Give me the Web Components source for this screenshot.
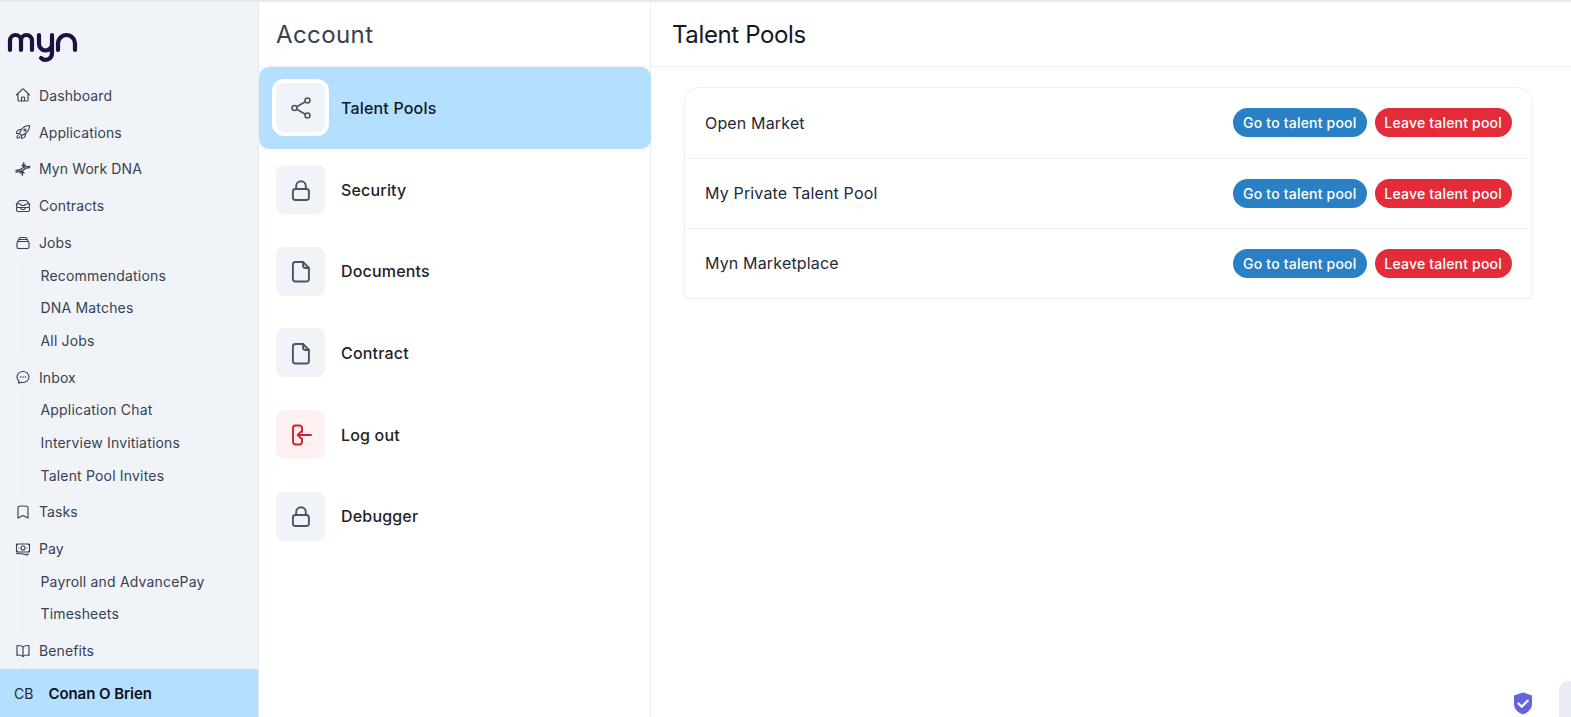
<!DOCTYPE html>
<html>
<head>
<meta charset="utf-8">
<style>
  html, body { margin: 0; height: 100%; }
  body { font-family: Inter, "Liberation Sans", sans-serif; color: #111827; background: #fff; overflow: hidden; }
</style>
</head>
<body>
<app-shell>
  <side-bar slot="side">
    <nav-item icon="home">Dashboard</nav-item>
    <nav-item icon="rocket">Applications</nav-item>
    <nav-item icon="dna">Myn Work DNA</nav-item>
    <nav-item icon="inbox">Contracts</nav-item>
    <nav-item icon="stack">Jobs</nav-item>
    <sub-nav>
      <sub-item>Recommendations</sub-item>
      <sub-item>DNA Matches</sub-item>
      <sub-item>All Jobs</sub-item>
    </sub-nav>
    <nav-item icon="chat">Inbox</nav-item>
    <sub-nav>
      <sub-item>Application Chat</sub-item>
      <sub-item>Interview Invitiations</sub-item>
      <sub-item>Talent Pool Invites</sub-item>
    </sub-nav>
    <nav-item icon="bookmark">Tasks</nav-item>
    <nav-item icon="money">Pay</nav-item>
    <sub-nav>
      <sub-item>Payroll and AdvancePay</sub-item>
      <sub-item>Timesheets</sub-item>
    </sub-nav>
    <nav-item icon="book">Benefits</nav-item>
    <sub-nav style="height: 20px"></sub-nav>
  </side-bar>
  <account-panel slot="middle">
    <account-row icon="share" active>Talent Pools</account-row>
    <account-row icon="lock">Security</account-row>
    <account-row icon="file">Documents</account-row>
    <account-row icon="file">Contract</account-row>
    <account-row icon="logout" danger>Log out</account-row>
    <account-row icon="lock">Debugger</account-row>
  </account-panel>
  <pools-panel slot="main">
    <pool-row>Open Market</pool-row>
    <pool-row>My Private Talent Pool</pool-row>
    <pool-row>Myn Marketplace</pool-row>
  </pools-panel>
</app-shell>

<script>
const ICONS = {
  home: '<path d="M2.25 12l8.954-8.955c.44-.439 1.152-.439 1.591 0L21.75 12M4.5 9.75v10.125c0 .621.504 1.125 1.125 1.125H9.75v-4.875c0-.621.504-1.125 1.125-1.125h2.25c.621 0 1.125.504 1.125 1.125V21h4.125c.621 0 1.125-.504 1.125-1.125V9.75M8.25 21h8.25"/>',
  rocket: '<path d="M15.59 14.37a6 6 0 01-5.84 7.38v-4.8m5.84-2.58a14.98 14.98 0 006.16-12.12A14.98 14.98 0 009.631 8.41m5.96 5.96a14.926 14.926 0 01-5.841 2.58m-.119-8.54a6 6 0 00-7.381 5.84h4.8m2.581-5.84a14.927 14.927 0 00-2.58 5.84m2.699 2.7c-.103.021-.207.041-.311.06a15.09 15.09 0 01-2.448-2.448 14.9 14.9 0 01.06-.312m-2.24 2.39a4.493 4.493 0 00-1.757 4.306 4.493 4.493 0 004.306-1.758M16.5 9a1.5 1.5 0 11-3 0 1.5 1.5 0 013 0z"/>',
  dna: '<path stroke-width="2" d="M1.500 14c4.500 0 6.500-.5 8.500-2.500s4-3.500 12-3.500"/><path stroke-width="2" d="M1.500 16.500c8 0 9.500-1.500 11.500-3.500s4-3 9-3"/><path stroke-width="2" d="M13 2.500V8M10.500 6l2.500 2.500L15.500 6"/><path stroke-width="2" d="M11 21.500V16M8.500 18l2.500-2.500 2.500 2.500"/>',
  inbox: '<path d="M7.875 14.25l1.214 1.942a2.25 2.25 0 001.908 1.058h2.006c.776 0 1.497-.4 1.908-1.058l1.214-1.942M2.41 9h4.636a2.25 2.25 0 011.872 1.002l.164.246a2.25 2.25 0 001.872 1.002h2.092a2.25 2.25 0 001.872-1.002l.164-.246A2.25 2.25 0 0116.954 9h4.636M2.41 9a2.25 2.25 0 00-.16.832V12a2.25 2.25 0 002.25 2.25h15A2.25 2.25 0 0021.75 12V9.832c0-.287-.055-.57-.16-.832M2.41 9a2.25 2.25 0 01.382-.632l3.285-3.832a2.25 2.25 0 011.708-.786h8.43c.657 0 1.281.287 1.709.786l3.284 3.832c.163.19.291.404.382.632M4.500 20.25h15A2.25 2.25 0 0021.75 18v-2.625c0-.621-.504-1.125-1.125-1.125H3.375c-.621 0-1.125.504-1.125 1.125V18a2.25 2.25 0 002.25 2.25z"/>',
  stack: '<path d="M6 6.878V6a2.25 2.25 0 012.25-2.25h7.500A2.25 2.25 0 0118 6v.878m-12 0c.235-.083.487-.128.75-.128h10.500c.263 0 .515.045.75.128m-12 0A2.25 2.25 0 004.500 9v.878m13.500-3A2.25 2.25 0 0119.500 9v.878m0 0a2.246 2.246 0 00-.75-.128H5.250c-.263 0-.515.045-.75.128m15 0A2.25 2.25 0 0121 12v6a2.25 2.25 0 01-2.25 2.25H5.250A2.25 2.25 0 013 18v-6c0-.98.626-1.813 1.500-2.122"/>',
  chat: '<path d="M8.625 12a.375.375 0 11-.75 0 .375.375 0 01.75 0zm0 0H8.25m4.125 0a.375.375 0 11-.75 0 .375.375 0 01.75 0zm0 0H12m4.125 0a.375.375 0 11-.75 0 .375.375 0 01.75 0zm0 0h-.375M21 12c0 4.556-4.03 8.25-9 8.25a9.764 9.764 0 01-2.555-.337A5.972 5.972 0 015.41 20.97a5.969 5.969 0 01-.474-.065 4.48 4.48 0 00.978-2.025c.09-.457-.133-.901-.467-1.226C3.93 16.178 3 14.189 3 12c0-4.556 4.03-8.25 9-8.25s9 3.694 9 8.25z"/>',
  bookmark: '<path d="M17.593 3.322c1.1.128 1.907 1.077 1.907 2.185V21L12 17.25 4.500 21V5.507c0-1.108.806-2.057 1.907-2.185a48.507 48.507 0 0111.186 0z"/>',
  money: '<path d="M2.25 18.75a60.07 60.07 0 0115.797 2.101c.727.198 1.453-.342 1.453-1.096V18.75M3.750 4.500v.75A.75.75 0 013 6h-.75m0 0v-.375c0-.621.504-1.125 1.125-1.125H20.25M2.25 6v9m18-10.500v.75c0 .414.336.75.75.75h.75m-1.500-1.500h.375c.621 0 1.125.504 1.125 1.125v9.750c0 .621-.504 1.125-1.125 1.125h-.375m1.500-1.500H21a.75.75 0 00-.75.75v.75m0 0H3.750m0 0h-.375a1.125 1.125 0 01-1.125-1.125V15m1.500 1.500v-.75A.75.75 0 003 15h-.75M15 10.500a3 3 0 11-6 0 3 3 0 016 0zm3 0h.008v.008H18V10.500zm-12 0h.008v.008H6V10.500z"/>',
  book: '<path d="M12 6.042A8.967 8.967 0 006 3.750c-1.052 0-2.062.18-3 .512v14.25A8.987 8.987 0 016 18c2.305 0 4.408.867 6 2.292m0-14.25a8.966 8.966 0 016-2.292c1.052 0 2.062.18 3 .512v14.25A8.987 8.987 0 0018 18a8.967 8.967 0 00-6 2.292m0-14.25v14.25"/>',
  share: '<circle cx="5.500" cy="12" r="2.500"/><circle cx="18.500" cy="4.500" r="2.500"/><circle cx="18.500" cy="19.500" r="2.500"/><path d="M7.700 10.700l8.600-4.900M7.700 13.300l8.600 4.900"/>',
  lock: '<path d="M7.200 11V8a4.800 4.800 0 019.600 0v3"/><rect x="3.900" y="11" width="16" height="11" rx="2.500"/>',
  file: '<path d="M6.400 3h7.600l5.900 6v11a2.500 2.500 0 01-2.500 2.500H6.400A2.500 2.500 0 013.900 20V5.500A2.500 2.500 0 016.400 3z"/><path d="M14 3v3.500A2.500 2.500 0 0016.500 9h3.400"/>',
  logout: '<path d="M13 9V5a2.500 2.500 0 00-2.500-2.500h-4A2.500 2.500 0 004 5v14a2.500 2.500 0 002.500 2.500h4A2.500 2.500 0 0013 19v-3.500"/><path d="M22 12H9M12 8.700L8.700 12l3.300 3.300"/>'
};

class IconGlyph extends HTMLElement {
  connectedCallback() {
    const name = this.getAttribute('name');
    this.attachShadow({ mode: 'open' });
    this.shadowRoot.innerHTML = `
      <style>
        :host { display: inline-flex; width: var(--size, 16px); height: var(--size, 16px); flex: none; }
        svg { width: 100%; height: 100%; fill: none; stroke: currentColor; stroke-width: var(--weight, 1.5); stroke-linecap: round; stroke-linejoin: round; }
      </style>
      <svg viewBox="0 0 24 24">${ICONS[name] || ''}</svg>`;
  }
}
customElements.define('icon-glyph', IconGlyph);

class AppShell extends HTMLElement {
  connectedCallback() {
    this.attachShadow({ mode: 'open' });
    this.shadowRoot.innerHTML = `
      <style>
        :host { display: flex; flex-direction: column; height: 717px; position: relative; overflow: hidden; }
        .topline { height: 2px; background: #e6e7ea; flex: none; }
        .cols { display: flex; flex: 1; min-height: 0; }
        .shield { position: absolute; left: 1513px; top: 692px; width: 20px; height: 23px; }
        .chat-stub { position: absolute; left: 1559px; top: 681px; width: 30px; height: 50px; border-radius: 10px; background: #e9ebf5; }
      </style>
      <div class="topline"></div>
      <div class="cols">
        <slot name="side"></slot>
        <slot name="middle"></slot>
        <slot name="main"></slot>
      </div>
      <svg class="shield" viewBox="0 0 20 23">
        <path fill="#6465de" d="M10 .5l9 3v8.500c0 5-4 8.600-9 10.500C5 20.600 1 17 1 12V3.500z"/>
        <path fill="none" stroke="#fff" stroke-width="2.200" stroke-linecap="round" stroke-linejoin="round" d="M5.500 11.500l3.200 3.200 6-6"/>
      </svg>
      <div class="chat-stub"></div>`;
  }
}
customElements.define('app-shell', AppShell);

class SideBar extends HTMLElement {
  connectedCallback() {
    this.attachShadow({ mode: 'open' });
    this.shadowRoot.innerHTML = `
      <style>
        :host { display: flex; flex-direction: column; width: 259px; flex: none; background: #f0f4f9; box-sizing: border-box; border-right: 1px solid #e8ebf0; }
        .logo { height: 75px; flex: none; box-sizing: border-box; padding: 29px 0 0 6px; }
        .logo svg { display: block; width: 76px; height: 36px; fill: none; stroke: #1b1240; stroke-width: 4.200; stroke-linecap: round; stroke-linejoin: round; }
        nav { flex: 1; min-height: 0; overflow: hidden; display: flex; flex-direction: column; }
        .user { height: 48px; flex: none; display: flex; align-items: center; background: #b5dffe; font-size: 14px; padding-left: 14px; gap: 15px; color: #1f2937; }
        .user b { font-size: 15px; font-weight: 600; letter-spacing: -.05px; color: #0b1220; }
      </style>
      <div class="logo">
        <svg viewBox="0 0 76 36">
          <path d="M4 19V9.500a5.500 5.500 0 0 1 11 0V19M15 9.500a5.500 5.500 0 0 1 11 0V19"/>
          <path d="M33 4v9a6.500 6.500 0 0 0 13 0V4M46 13v9.500a6.500 6.500 0 0 1-11 4.600"/>
          <path d="M52 19V12.500a8.500 8.500 0 0 1 17 0V19"/>
        </svg>
      </div>
      <nav><slot></slot></nav>
      <div class="user"><span>CB</span><b>Conan O Brien</b></div>`;
  }
}
customElements.define('side-bar', SideBar);

class NavItem extends HTMLElement {
  connectedCallback() {
    const icon = this.getAttribute('icon');
    this.attachShadow({ mode: 'open' });
    this.shadowRoot.innerHTML = `
      <style>
        :host { display: flex; align-items: center; height: 36.800px; flex: none; padding-left: 15px; gap: 8px; font-size: 14px; letter-spacing: .1px; color: #374151; --size: 16px; --weight: 1.700; }
      </style>
      <icon-glyph name="${icon}"></icon-glyph>
      <span><slot></slot></span>`;
  }
}
customElements.define('nav-item', NavItem);

class SubNav extends HTMLElement {
  connectedCallback() {
    this.attachShadow({ mode: 'open' });
    this.shadowRoot.innerHTML = `
      <style>
        :host { display: flex; flex-direction: column; flex: none; margin: -2px 0 2px 22px; border-left: 1px solid #e6e9ef; padding-left: 17.500px; }
      </style>
      <slot></slot>`;
  }
}
customElements.define('sub-nav', SubNav);

class SubItem extends HTMLElement {
  connectedCallback() {
    this.attachShadow({ mode: 'open' });
    this.shadowRoot.innerHTML = `
      <style>
        :host { display: flex; align-items: center; height: 32.600px; font-size: 14px; letter-spacing: .18px; color: #374151; }
      </style>
      <slot></slot>`;
  }
}
customElements.define('sub-item', SubItem);

class AccountPanel extends HTMLElement {
  connectedCallback() {
    this.attachShadow({ mode: 'open' });
    this.shadowRoot.innerHTML = `
      <style>
        :host { display: flex; flex-direction: column; width: 392px; flex: none; box-sizing: border-box; border-right: 1px solid #eef0f3; }
        h2 { margin: 0; height: 65px; flex: none; box-sizing: border-box; display: flex; align-items: center; padding-left: 17px; font-size: 24px; font-weight: 400; letter-spacing: .4px; color: #374151; border-bottom: 1px solid #f1f2f5; }
        .rows { display: flex; flex-direction: column; }
      </style>
      <h2>Account</h2>
      <div class="rows"><slot></slot></div>`;
  }
}
customElements.define('account-panel', AccountPanel);

class AccountRow extends HTMLElement {
  connectedCallback() {
    const icon = this.getAttribute('icon');
    this.attachShadow({ mode: 'open' });
    this.shadowRoot.innerHTML = `
      <style>
        :host { display: flex; align-items: center; height: 81.700px; box-sizing: border-box; padding-left: 17px; gap: 16px; font-size: 16px; font-weight: 500; letter-spacing: .18px; color: #1f2329; border-radius: 10px; margin-right: -1px; }
        :host([active]) { background: #b5dffe; color: #111827; }
        .box { width: 49px; height: 49px; border-radius: 8px; background: #f0f4f9; display: flex; align-items: center; justify-content: center; color: #4b5563; --size: 24px; --weight: 1.900; }
        :host([active]) .box { box-shadow: 0 0 0 4px #fff; }
        :host([active]) .box { --weight: 1.600; }
        :host([danger]) .box { background: #fef1f1; color: #d0202e; }
      </style>
      <div class="box"><icon-glyph name="${icon}"></icon-glyph></div>
      <span><slot></slot></span>`;
  }
}
customElements.define('account-row', AccountRow);

class PoolsPanel extends HTMLElement {
  connectedCallback() {
    this.attachShadow({ mode: 'open' });
    this.shadowRoot.innerHTML = `
      <style>
        :host { display: flex; flex-direction: column; flex: 1; min-width: 0; }
        h2 { margin: 0; height: 65px; flex: none; box-sizing: border-box; display: flex; align-items: center; padding-left: 21px; font-size: 24px; font-weight: 400; letter-spacing: -.37px; color: #111827; border-bottom: 1px solid #f1f2f5; }
        .card { margin: 20.400px 38px 0 33px; border: 1px solid #eef0f4; border-bottom: 0; border-radius: 16px 16px 0 0; }
      </style>
      <h2>Talent Pools</h2>
      <div class="card"><slot></slot></div>`;
  }
}
customElements.define('pools-panel', PoolsPanel);

class PoolRow extends HTMLElement {
  connectedCallback() {
    this.attachShadow({ mode: 'open' });
    this.shadowRoot.innerHTML = `
      <style>
        :host { display: flex; align-items: center; height: 70.200px; box-sizing: border-box; padding: 0 20.500px 0 20px; font-size: 16px; letter-spacing: .16px; color: #1f2937; border-bottom: 1px solid #eef0f4; }
        span { flex: 1; }
        .actions { display: flex; gap: 8px; }
        button { font: 500 14px Inter, "Liberation Sans", sans-serif; letter-spacing: .2px; height: 29px; border: 0; border-radius: 15px; padding: 0 10.300px; color: #fff; }
        .go { background: #2980c4; }
        .leave { background: #e32b3a; padding: 0 9.500px; }
      </style>
      <span><slot></slot></span>
      <div class="actions">
        <button class="go">Go to talent pool</button>
        <button class="leave">Leave talent pool</button>
      </div>`;
  }
}
customElements.define('pool-row', PoolRow);
</script>
</body>
</html>
